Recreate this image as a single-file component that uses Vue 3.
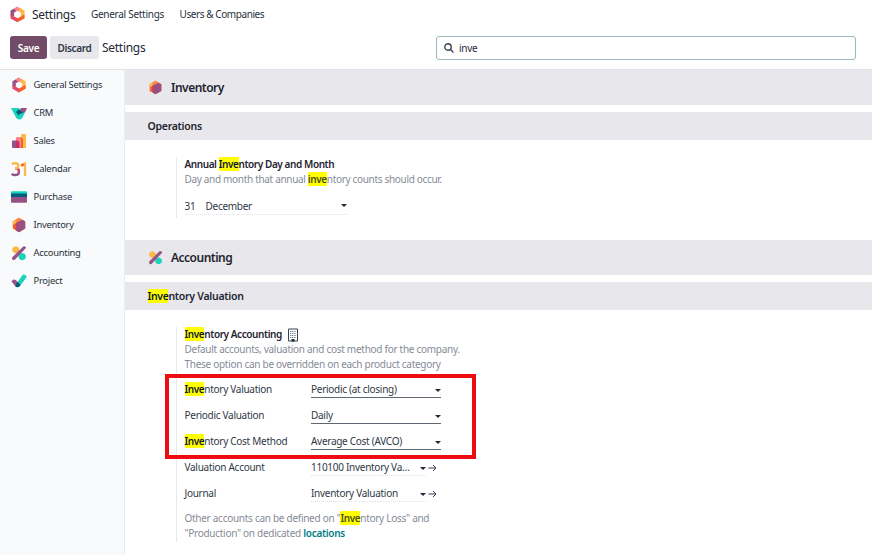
<template>
    <div class="webClient">
        <header class="navbar">
            <AppIcon name="settings" class="navLogo" />
            <span class="navBrand">Settings</span>
            <a class="navLink general">General Settings</a>
            <a class="navLink users">Users &amp; Companies</a>
        </header>
        <div class="controlPanel">
            <button class="btn save">Save</button>
            <button class="btn discard">Discard</button>
            <span class="breadcrumb">Settings</span>
            <div class="searchBox">
                <svg class="searchIcon" viewBox="0 0 10 10"><circle cx="4" cy="4" r="3.2" /><path d="M6.3 6.3L9.4 9.4" /></svg>
                <span>{{ search }}</span>
            </div>
        </div>
        <div class="content">
            <nav class="sidebar">
                <a v-for="tab in tabs" :key="tab.label" class="tab">
                    <AppIcon :name="tab.icon" class="tabIcon" />
                    <span>{{ tab.label }}</span>
                </a>
            </nav>
            <main class="settings">
                <h2 class="appTitle">
                    <AppIcon name="inventory" class="appIcon" />
                    <span>Inventory</span>
                </h2>
                <h3 class="blockTitle"><span>Operations</span></h3>
                <section class="settingBox first">
                    <p class="settingLabel"><HighlightText text="Annual Inventory Day and Month" /></p>
                    <p class="help"><HighlightText text="Day and month that annual inventory counts should occur." /></p>
                    <div class="dateField">
                        <span class="day">31</span>
                        <span class="month">December</span>
                        <i class="caret"></i>
                    </div>
                </section>
                <h2 class="appTitle">
                    <AppIcon name="accounting" class="appIcon" />
                    <span>Accounting</span>
                </h2>
                <h3 class="blockTitle"><HighlightText text="Inventory Valuation" /></h3>
                <section class="settingBox second">
                    <p class="settingLabel">
                        <HighlightText text="Inventory Accounting" />
                        <svg class="building" viewBox="0 0 12 14">
                            <path class="wall" d="M1.5 1h9v12h-9z" />
                            <path class="windows" d="M3 3.5h6M3 5.5h6M3 7.5h6M3 9.5h6" />
                            <path class="door" d="M4.5 11h3v2.5h-3z" />
                        </svg>
                    </p>
                    <p class="help">Default accounts, valuation and cost method for the company.<br>These option can be overridden on each product category</p>
                    <div class="fields">
                        <div v-for="field in fields" :key="field.label" class="field">
                            <span class="fieldLabel"><HighlightText :text="field.label" /></span>
                            <span class="select" :class="{ linked: field.link }">
                                <span>{{ field.value }}</span>
                                <i class="caret"></i>
                            </span>
                            <svg v-if="field.link" class="arrow" viewBox="0 0 9 8"><path d="M0.5 4H8M5 1L8 4L5 7" /></svg>
                        </div>
                        <div class="marker"></div>
                    </div>
                    <p class="help note"><HighlightText text='Other accounts can be defined on "Inventory Loss" and' /><br>"Production" on dedicated <a class="link">locations</a></p>
                </section>
            </main>
        </div>
    </div>
</template>

<script setup>
import { ref, h } from 'vue';

const search = ref('inve');

const tabs = [
    { label: 'General Settings', icon: 'settings' },
    { label: 'CRM', icon: 'crm' },
    { label: 'Sales', icon: 'sales' },
    { label: 'Calendar', icon: 'calendar' },
    { label: 'Purchase', icon: 'purchase' },
    { label: 'Inventory', icon: 'inventory' },
    { label: 'Accounting', icon: 'accounting' },
    { label: 'Project', icon: 'project' },
];

const fields = [
    { label: 'Inventory Valuation', value: 'Periodic (at closing)' },
    { label: 'Periodic Valuation', value: 'Daily' },
    { label: 'Inventory Cost Method', value: 'Average Cost (AVCO)' },
    { label: 'Valuation Account', value: '110100 Inventory Va…', link: true },
    { label: 'Journal', value: 'Inventory Valuation', link: true },
];

// Each icon is a list of [path, color] drawn on a 16x16 grid
const icons = {
    settings: [
        ['M8 0.6L1.4 4.3V9L4.8 10V6.2L8 4.4z', '#985184'],
        ['M8 0.6L4.6 2.5L7 5L8 4.4L11 6L12 2.9z', '#fc868b'],
        ['M10 1.7L14.6 4.3V11.7L11.2 9.8V6.2L9 5z', '#fbb945'],
        ['M14.6 11.7L8 15.4L6.5 13L8 11.6L11.2 9.8L14.6 8z', '#f86126'],
        ['M1.4 8V11.7L8 15.4V11.6L4.8 9.8z', '#e2496c'],
    ],
    crm: [
        ['M0 3H8L11 9L9 14Q6.5 15 5 12.5z', '#1ad3bb'],
        ['M8 3H16L14 7.5L9 9z', '#985184'],
        ['M3.5 3H8L10.5 7L7.5 9z', '#1ad3bb'],
        ['M7.5 4.5L12.5 7.5L8 11L5 7z', '#005e7a'],
        ['M14 7.5L11 13.5Q8 15.5 6 13L8.5 9z', '#1ad3bb'],
        ['M8 3H10L9 4.8z', '#f8fafc'],
    ],
    sales: [
        ['M1 8.5Q1 7.5 2 7.5H5V15H2Q1 15 1 14z', '#985184'],
        ['M5 5Q5 4 6 4H10V15H5z', '#fc868b'],
        ['M5 7.5H6.5Q8.5 8 8.5 10V15H5z', '#c82f64'],
        ['M10 2Q10 1 11 1H14Q15 1 15 2V14Q15 15 14 15H10z', '#fbb945'],
        ['M10 4Q12 5 12 7V15H10z', '#f86126'],
    ],
    purchase: [
        ['M0 3Q0 2.3 1 2.3H15Q16 2.3 16 3.3V6H0z', '#1ad3bb'],
        ['M0 4.5H16V8H0z', '#005e7a'],
        ['M0 8H16V12.7Q16 13.7 15 13.7H1Q0 13.7 0 12.7z', '#985184'],
    ],
    inventory: [
        ['M8 0.8L14.2 4.4V11.6L8 15.2L1.8 11.6V4.4z', '#f86126'],
        ['M8 0.8L14.2 4.4L11 6L4.8 7.5L1.8 4.4z', '#fc8a4b'],
        ['M1.8 4.4L4.8 2.6V6L1.8 8z', '#fbb945'],
        ['M11.2 2.8L14.2 4.4V11.6L8 15.2L4.8 13.4V6.2z', '#985184'],
        ['M4.8 6.2L8 4.4V10L4.8 12z', '#b5446f'],
    ],
    accounting: [
        ['M4.8 1.2A3.6 3.6 0 1 1 4.7 1.2z', '#fbb945'],
        ['M11.3 8A3.6 3.6 0 1 1 11.2 8z', '#1ad3bb'],
        ['M1 12.6L12.2 1.4Q14.2 0.5 15.2 2.8L4 14.6Q1 16.5 1 12.6z', '#985184'],
    ],
    project: [
        ['M11.7 1.7Q14.5 1 15.8 4L8.5 13.5Q6.5 15 4.5 13L8 7z', '#1ad3bb'],
        ['M0.4 8.3Q2.5 5.5 5 7.3L8.5 11Q7.3 15.5 4.3 13.2z', '#985184'],
        ['M6.3 8.7L9.6 12Q6.8 15.8 4.3 13.2z', '#005e7a'],
    ],
};

const AppIcon = (props) => {
    if (props.name === 'calendar') {
        return h('svg', { viewBox: '0 0 16 16', fill: 'none', 'stroke-width': 2.3 }, [
            h('path', { d: 'M4 7.4H5Q8 7.6 8 10.4Q8 14 4.2 14Q2 14 0.8 12.8', stroke: '#985184' }),
            h('path', { d: 'M6.5 7.8Q8 8.7 8 10.4', stroke: '#e2496c' }),
            h('path', { d: 'M1 3.2Q2.5 2.2 4.3 2.2Q7.3 2.4 7.3 4.8Q7 7.4 4 7.4', stroke: '#fbb945' }),
            h('path', { d: 'M10 4.5L14 2.5V15', stroke: '#fbb945' }),
            h('path', { d: 'M10 4.7L13 3.2', stroke: '#f86126' }),
        ]);
    }
    return h('svg', { viewBox: '0 0 16 16' }, icons[props.name].map(([d, fill]) => h('path', { d, fill })));
};
AppIcon.props = ['name'];

// Wraps the part of the text that matches the search
const HighlightText = (props) => {
    const index = props.text.toLowerCase().indexOf(search.value);
    if (index < 0) return h('span', props.text);
    const end = index + search.value.length;
    return h('span', [
        props.text.slice(0, index),
        h('mark', props.text.slice(index, end)),
        props.text.slice(end),
    ]);
};
HighlightText.props = ['text'];
</script>

<style>
    body{
        background-color: #fff;
        overflow: hidden;
    }
    .webClient mark{
        background-color: #ff0;
        color: #111827;
        font-weight: 600;
        letter-spacing: -.4px;
        border-radius: 1px;
    }
    .webClient .help mark{
        color: #4b5015;
    }
</style>

<style scoped>
    .webClient{
        height: 555px;
        display: flex;
        flex-direction: column;
        font-family: "Noto Sans", "Open Sans", sans-serif;
        font-size: 10px;
        letter-spacing: -.28px;
        color: #303846;
        white-space: nowrap;
    }
    h2, h3, p{
        margin: 0;
    }
    .navbar{
        display: flex;
        align-items: center;
        height: 28px;
        padding-left: 9px;
    }
    .navLogo{
        width: 17px;
        height: 17px;
    }
    .navBrand{
        width: 59px;
        margin-left: 6px;
        font-size: 12px;
        color: #1f2937;
    }
    .navLink{
        color: #27303c;
    }
    .navLink.general{
        width: 88.5px;
    }
    .navLink.users{
        letter-spacing: -.42px;
    }
    .controlPanel{
        display: flex;
        align-items: center;
        box-sizing: border-box;
        height: 42px;
        padding: 0 16px 2px 10px;
        border-bottom: 1px solid #e2e3e8;
    }
    .btn{
        height: 23px;
        padding: 0;
        border: 0;
        border-radius: 3px;
        font: 600 10px "Noto Sans", sans-serif;
        letter-spacing: -.35px;
    }
    .save{
        width: 37px;
        background-color: #714b67;
        color: #fff;
    }
    .discard{
        width: 49px;
        margin-left: 3px;
        background-color: #e7e7ec;
        color: #303846;
    }
    .breadcrumb{
        margin-left: 3px;
        font-size: 12px;
        color: #1f2937;
    }
    .searchBox{
        display: flex;
        align-items: center;
        gap: 5px;
        box-sizing: border-box;
        width: 420px;
        height: 24px;
        margin-left: auto;
        padding-left: 7px;
        border: 1px solid #9ab9bc;
        border-radius: 3px;
        color: #1f2937;
    }
    .searchIcon{
        width: 10px;
        height: 10px;
        fill: none;
        stroke: #374151;
        stroke-width: 1.4;
    }
    .content{
        flex: 1;
        display: flex;
        min-height: 0;
    }
    .sidebar{
        width: 124px;
        padding-top: 1px;
        background-color: #f9fafb;
        border-right: 1px solid #ebecf0;
        font-size: 9.4px;
        letter-spacing: -.25px;
        color: #27303c;
    }
    .tab{
        display: flex;
        align-items: center;
        gap: 7px;
        height: 28px;
        padding-left: 10.5px;
    }
    .tab span{
        padding-bottom: 1px;
    }
    .tabIcon{
        width: 16px;
        height: 16px;
        margin-bottom: 1px;
    }
    .settings{
        flex: 1;
    }
    .appTitle{
        display: flex;
        align-items: center;
        gap: 8px;
        height: 35px;
        margin-bottom: 7px;
        padding-left: 23px;
        background-color: #e8e8ec;
        font-size: 12px;
        font-weight: 600;
        letter-spacing: -.5px;
        color: #1f2430;
    }
    .appIcon{
        width: 15px;
        height: 15px;
    }
    .blockTitle{
        height: 28px;
        padding-left: 22.5px;
        background-color: #e8e8ec;
        font-size: 10.5px;
        line-height: 28px;
        font-weight: 600;
        letter-spacing: -.27px;
        color: #1f2430;
    }
    .settingBox{
        margin-left: 51px;
        padding-left: 7.5px;
        border-left: 1px solid #e7e9ed;
    }
    .first{
        height: 61px;
        margin-top: 17px;
        margin-bottom: 22px;
    }
    .second{
        height: 215px;
        margin-top: 17px;
    }
    .settingLabel{
        display: flex;
        align-items: center;
        gap: 5px;
        height: 15px;
        font-weight: 600;
        letter-spacing: -.42px;
        color: #1f2430;
    }
    .settingLabel > span{
        line-height: 14px;
        padding-bottom: 1px;
    }
    .building{
        width: 12px;
        height: 14px;
    }
    .wall{
        fill: #fff;
        stroke: #374151;
    }
    .windows{
        fill: none;
        stroke: #7b828d;
        stroke-dasharray: 1.2 .6;
    }
    .door{
        fill: #1f2937;
    }
    .help{
        line-height: 15px;
        color: #858b96;
    }
    .first .help{
        letter-spacing: -.32px;
    }
    .dateField{
        display: flex;
        align-items: center;
        width: 162px;
        height: 17px;
        margin-top: 10px;
        border-bottom: 1px dotted #dfe1e5;
    }
    .dateField .day{
        width: 21px;
    }
    .month{
        flex: 1;
    }
    .caret{
        border: 3px solid transparent;
        border-top-color: #1f2937;
        border-bottom: 0;
    }
    .fields{
        position: relative;
        padding-top: 5px;
    }
    .field{
        display: flex;
        height: 26px;
    }
    .fieldLabel{
        width: 126.5px;
        line-height: 24px;
    }
    .select{
        display: flex;
        align-items: center;
        justify-content: space-between;
        box-sizing: border-box;
        width: 130px;
        height: 18px;
        margin-top: 3px;
        padding-top: 1px;
        border-bottom: 1px solid #5f6773;
        line-height: 16px;
    }
    .select .caret{
        margin-top: 2px;
    }
    .linked{
        width: 115px;
        border-bottom: 1px dotted #dfe1e5;
    }
    .arrow{
        width: 9px;
        height: 8px;
        margin: 9px 0 0 2px;
        fill: none;
        stroke: #374151;
    }
    /* Red frame over the first three fields */
    .marker{
        position: absolute;
        left: -19.5px;
        top: 2px;
        box-sizing: border-box;
        width: 311px;
        height: 85px;
        border: 4px solid #ec0c12;
    }
    .note{
        margin-top: 4px;
    }
    .link{
        color: #017e84;
        font-weight: 600;
    }
</style>
